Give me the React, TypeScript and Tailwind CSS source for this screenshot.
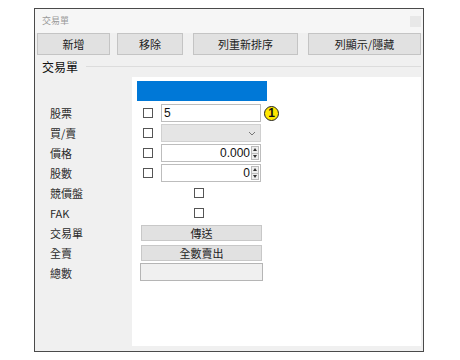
import React from 'react';

const cjk = { fontFamily: '"Noto Sans CJK TC", "Noto Sans", sans-serif' };

const labels = ['股票', '買/賣', '價格', '股數', '競價盤', 'FAK', '交易單', '全賣', '總數'];

const toolbar = [
  { text: '新增', cls: 'ml-[2px] w-[73px]' },
  { text: '移除', cls: 'ml-[7px] w-[66px]' },
  { text: '列重新排序', cls: 'ml-[10px] w-[105px]' },
  { text: '列顯示/隱藏', cls: 'ml-[10px] w-[113px]' },
];

const Box = () => <div className="w-[10px] h-[10px] border border-[#555] bg-white" />;

const Spinner = () => (
  <div className="flex flex-col w-[8px] h-[14px] mr-[1px] border border-[#bbb] bg-[#eee]">
    <div className="flex-1 flex items-center justify-center border-b border-[#bbb]">
      <div className="w-0 h-0 border-l-[2px] border-r-[2px] border-b-[3px] border-l-transparent border-r-transparent border-b-[#333]" />
    </div>
    <div className="flex-1 flex items-center justify-center">
      <div className="w-0 h-0 border-l-[2px] border-r-[2px] border-t-[3px] border-l-transparent border-r-transparent border-t-[#333]" />
    </div>
  </div>
);

const NumField: React.FC<{ value: string }> = ({ value }) => (
  <div className="w-[100px] h-[18px] border border-[#bdbdbd] bg-white flex items-center justify-end">
    <span className="text-[12px] text-[#111] mr-[1px]" style={{ fontFamily: '"Liberation Sans", sans-serif' }}>{value}</span>
    <Spinner />
  </div>
);

export default function App() {
  return (
    <div className="w-[460px] h-[360px] bg-white pt-[8px] pl-[34px]" style={cjk}>
      <div className="w-[390px] h-[344px] border border-[#4a4a4a] bg-[#f0f0f0] flex flex-col">
        {/* title bar */}
        <div className="h-[24px] flex items-center justify-between bg-[#f6f6f6]">
          <span className="ml-[7px] text-[9px] text-[#9a9a9a]">交易單</span>
          <div className="w-[11px] h-[11px] mr-[2px] bg-[#e8e8e8]" />
        </div>
        {/* toolbar */}
        <div className="h-[23px] flex">
          {toolbar.map((b) => (
            <div
              key={b.text}
              className={`${b.cls} h-[22px] bg-[#e1e1e1] border border-[#c4c4c4] flex items-center justify-center text-[11px] text-[#222]`}
            >
              {b.text}
            </div>
          ))}
        </div>
        {/* group header */}
        <div className="h-[21px] flex items-center">
          <span className="ml-[7px] text-[12px] text-[#111]">交易單</span>
          <div className="flex-1 h-px bg-[#dcdcdc] ml-[8px] mr-[2px]" />
        </div>
        {/* body */}
        <div className="flex-1 flex mx-[2px] mb-[5px]">
          <div className="w-[95px] bg-[#f0f0f0] pt-[26px]">
            {labels.map((l) => (
              <div key={l} className="h-[20px] pl-[13px] flex items-center text-[11px] text-[#2a2a2a]">
                {l}
              </div>
            ))}
          </div>
          <div className="flex-1 bg-white pt-[4px]">
            <div className="ml-[5px] w-[130px] h-[20px] bg-[#0078d7]" />
            <div className="mt-[2px]">
              {/* 股票 */}
              <div className="h-[20px] flex items-center">
                <div className="ml-[11px]"><Box /></div>
                <div className="ml-[8px] w-[100px] h-[18px] border border-[#bdbdbd] bg-white flex items-center">
                  <span className="ml-[2px] text-[12px] text-[#111]" style={{ fontFamily: '"Liberation Sans", sans-serif' }}>5</span>
                </div>
                <div className="ml-[3px] w-[15px] h-[15px] rounded-full bg-[#ffe800] border-[1.5px] border-[#222] flex items-center justify-center text-[12px] font-bold leading-none text-[#111]" style={{ fontFamily: '"Liberation Sans", sans-serif' }}>
                  1
                </div>
              </div>
              {/* 買/賣 */}
              <div className="h-[20px] flex items-center">
                <div className="ml-[11px]"><Box /></div>
                <div className="ml-[8px] w-[100px] h-[18px] border border-[#d0d0d0] bg-[#e5e5e5] flex items-center justify-end">
                  <svg width="8" height="5" viewBox="0 0 8 5" className="mr-[4px]">
                    <path d="M1 1 L4 4 L7 1" fill="none" stroke="#777" strokeWidth="1" />
                  </svg>
                </div>
              </div>
              {/* 價格 */}
              <div className="h-[20px] flex items-center">
                <div className="ml-[11px]"><Box /></div>
                <div className="ml-[8px]"><NumField value="0.000" /></div>
              </div>
              {/* 股數 */}
              <div className="h-[20px] flex items-center">
                <div className="ml-[11px]"><Box /></div>
                <div className="ml-[8px]"><NumField value="0" /></div>
              </div>
              {/* 競價盤 */}
              <div className="h-[20px] flex items-center">
                <div className="ml-[62px]"><Box /></div>
              </div>
              {/* FAK */}
              <div className="h-[20px] flex items-center">
                <div className="ml-[62px]"><Box /></div>
              </div>
              {/* 傳送 */}
              <div className="h-[20px] flex items-center">
                <div className="ml-[9px] w-[121px] h-[16px] bg-[#e1e1e1] border border-[#c8c8c8] flex items-center justify-center text-[11px] text-[#222]">
                  傳送
                </div>
              </div>
              {/* 全數賣出 */}
              <div className="h-[20px] flex items-center">
                <div className="ml-[9px] w-[121px] h-[16px] bg-[#e1e1e1] border border-[#c8c8c8] flex items-center justify-center text-[11px] text-[#222]">
                  全數賣出
                </div>
              </div>
              {/* 總數 */}
              <div className="h-[20px] flex items-start">
                <div className="ml-[8px] w-[123px] h-[18px] bg-[#f0f0f0] border border-[#b5b5b5]" />
              </div>
            </div>
          </div>
        </div>
      </div>
    </div>
  );
}
